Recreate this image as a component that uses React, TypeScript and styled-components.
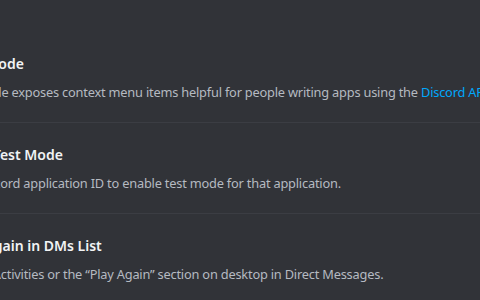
import React from "react";
import styled, { createGlobalStyle } from "styled-components";

const Global = createGlobalStyle`
  html, body {
    margin: 0;
    padding: 0;
    background: #313338;
    overflow: hidden;
  }
  body {
    width: 480px;
    height: 300px;
    font-family: "Noto Sans", "Open Sans", sans-serif;
  }
`;

const Page = styled.div`
  width: 480px;
  height: 300px;
  overflow: hidden;
  background: #313338;
`;

const Content = styled.div`
  margin-left: -88px;
  width: 700px;
  padding-top: 32px;
  display: flex;
  flex-direction: column;
`;

const Row = styled.section`
  padding: 22px 0 21px;
  border-bottom: 1px solid #3b3d43;
  display: flex;
  flex-direction: column;
  gap: 9px;
`;

const Title = styled.div`
  color: #f2f3f5;
  font-size: 14px;
  font-weight: 600;
  line-height: 20px;
  white-space: nowrap;
`;

const Desc = styled.div`
  color: #b5bac1;
  font-size: 12.8px;
  letter-spacing: -0.2px;
  line-height: 18px;
  white-space: nowrap;
`;

const Link = styled.a`
  color: #00a8fc;
  text-decoration: none;
`;

export default function App() {
  return (
    <Page>
      <Global />
      <Content>
        <Row>
          <Title>Developer Mode</Title>
          <Desc>
            Developer Mode exposes context menu items helpful for people writing apps using the{" "}
            <Link href="#">Discord API</Link>.
          </Desc>
        </Row>
        <Row>
          <Title>Application Test Mode</Title>
          <Desc>Enter your Discord application ID to enable test mode for that application.</Desc>
        </Row>
        <Row>
          <Title>Show Play Again in DMs List</Title>
          <Desc>Shows recent Activities or the “Play Again” section on desktop in Direct Messages.</Desc>
        </Row>
      </Content>
    </Page>
  );
}
